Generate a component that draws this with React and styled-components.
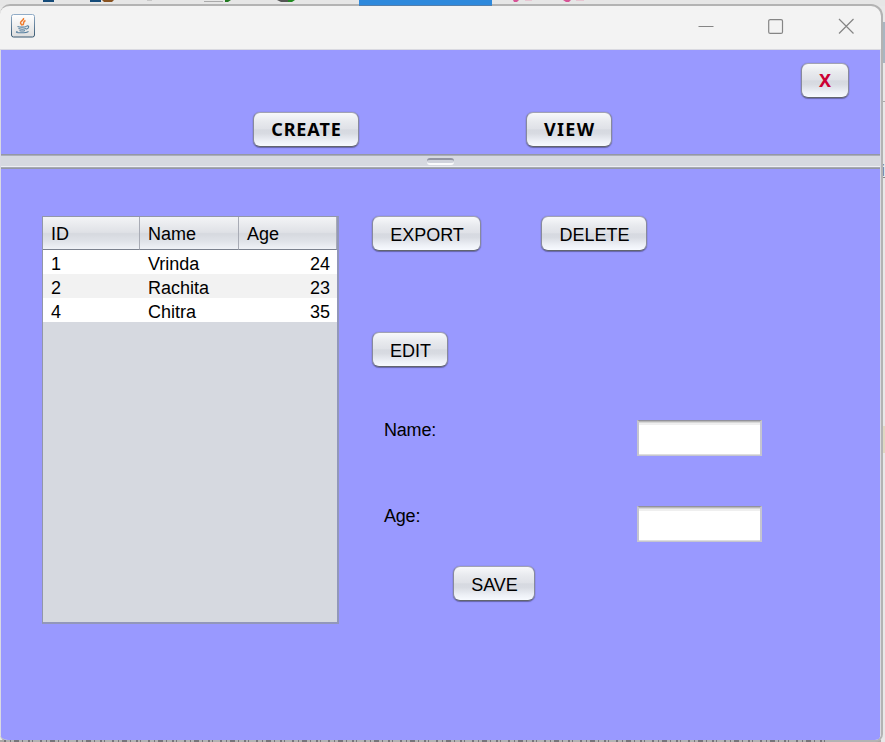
import React from "react";
import styled, { createGlobalStyle } from "styled-components";

const Global = createGlobalStyle`
  * { box-sizing: border-box; }
  body { margin: 0; overflow: hidden; }
`;

const Desktop = styled.div`
  position: relative;
  width: 885px;
  height: 742px;
  padding-top: 4px;
  overflow: hidden;
  background: #e8e8e8;
  font-family: "Liberation Sans", Arial, sans-serif;
  font-size: 18px;
  color: #000;
`;

const Backdrop = styled.svg`
  position: absolute;
  left: 0;
  top: 0;
`;

const EdgeShadow = styled.svg`
  position: absolute;
  left: 0;
  top: 0;
  pointer-events: none;
`;

const Window = styled.main`
  position: relative;
  width: 883px;
  height: 738px;
  overflow: hidden;
  display: flex;
  flex-direction: column;
  border: solid #b3b3b3;
  border-width: 2px 2px 2px 0;
  border-radius: 10px 12px 8px 8px;
  background: #f3f3f3;
`;

const TitleBar = styled.header`
  display: flex;
  align-items: center;
  justify-content: space-between;
  height: 44px;
  flex: none;
  padding: 0 26px 4px 11px;
  border-bottom: 1px solid #d9d9e0;
`;

const WindowControls = styled.div`
  display: flex;
  align-items: center;
  gap: 54px;
`;

const Client = styled.div`
  flex: 1;
  display: flex;
  flex-direction: column;
  border: solid #d9d9e3;
  border-width: 0 1px;
`;

const TopPane = styled.section`
  height: 104px;
  flex: none;
  padding: 13px 31px 0 252px;
  background: #99f;
`;

const CloseRow = styled.div`
  display: flex;
  justify-content: flex-end;
`;

const NavRow = styled.nav`
  display: flex;
  gap: 167px;
  margin-top: 14px;
`;

const Button = styled.button`
  flex: none;
  width: ${(p) => p.$width}px;
  height: 35px;
  padding: ${(p) => (p.$bold ? "0 0 1px" : "2px 0 0 1px")};
  border: 1.5px solid;
  border-color: #a2a3b3 #888a9c #62656f;
  border-radius: 7px;
  background: linear-gradient(#f8f9fb 0%, #e8eaee 25%, #dfe1e7 48%, #d6d9e0 51%, #d8dbe2 62%, #edf0f6 85%, #f7faff 100%);
  box-shadow: 0 1px 1px rgba(65, 65, 110, 0.55), 0 0 1px rgba(80, 80, 110, 0.7);
  color: ${(p) => (p.$danger ? "#cc0033" : "#000")};
  font: ${(p) => (p.$bold ? 'bold 18px "Noto Sans", sans-serif' : '18px "Liberation Sans", Arial, sans-serif')};
  letter-spacing: ${(p) => p.$tracking || 0}px;
  text-indent: ${(p) => p.$tracking || 0}px;
  line-height: 30px;
  white-space: nowrap;
`;

const Divider = styled.div`
  flex: none;
  height: 15px;
  display: flex;
  justify-content: center;
  padding-top: 2px;
  border: solid #9498a4;
  border-width: 1px 0;
  background: linear-gradient(#abaeb9 0 1px, #d6d9e0 1px 11px, #edeff3 11px 12px, #a6a9b4 12px);
`;

const Grip = styled.span`
  width: 27px;
  height: 7px;
  margin-top: 1px;
  border-radius: 3px;
  border-top: 2px solid #9295a3;
  border-bottom: 2px solid #fafbfc;
  background: #d0d3dc;
`;

const BottomPane = styled.section`
  flex: 1;
  display: flex;
  align-items: flex-start;
  gap: 33px;
  padding: 47px 0 0 41px;
  background: #99f;
`;

const TableFrame = styled.div`
  width: 297px;
  height: 408px;
  border: 1px solid #9297a1;
  border-width: 1px 2px 2px 1px;
  border-color: #9297a8 #9297ba #9297ba #9297a8;
  background: #d6d9e0;
`;

const Table = styled.table`
  width: 294px;
  table-layout: fixed;
  border-collapse: separate;
  border-spacing: 0;
`;

const HeadCell = styled.th`
  width: ${(p) => p.$width}px;
  height: 33px;
  padding: 2px 8px 0;
  border-right: 1px solid #a8abb5;
  border-bottom: 1px solid #7b818e;
  background: linear-gradient(#f3f4f6 0%, #dfe1e6 48%, #d6d9df 52%, #dfe2e8 75%, #f0f2f7 100%);
  font-weight: normal;
  text-align: left;
`;

const Row = styled.tr`
  height: 24px;
  background: ${(p) => (p.$shaded ? "#f2f2f2" : "#fff")};
`;

const Cell = styled.td`
  height: 24px;
  padding: 4px ${(p) => (p.$end ? 7 : 8)}px 0 8px;
  line-height: 20px;
  text-align: ${(p) => (p.$end ? "right" : "left")};
`;

const Editor = styled.form`
  display: flex;
  flex-direction: column;
`;

const Actions = styled.div`
  display: flex;
  gap: 60px;
  margin-bottom: 81px;
`;

const Field = styled.label`
  display: flex;
  justify-content: space-between;
  width: 378px;
  height: 36px;
  margin: ${(p) => p.$above}px 0 0 12px;
  line-height: 20px;
  letter-spacing: -0.2px;
`;

const TextInput = styled.input`
  width: 125px;
  height: 36px;
  border: 1px solid #c5c5d0;
  border-top: 1px solid #92929b;
  border-width: 1px 2px;
  background: #fff;
  box-shadow: inset 0 1px #b8b8b8, inset 0 2px #d8d8d8, inset 0 4px #efefef, inset 0 -1px #dedede;
`;

const SaveRow = styled.div`
  margin: 24px 0 0 81px;
`;

const records = [
  { id: 1, name: "Vrinda", age: 24 },
  { id: 2, name: "Rachita", age: 23 },
  { id: 4, name: "Chitra", age: 35 },
];

function DesktopBackdrop() {
  return (
    <Backdrop width="885" height="742">
      <rect width="885" height="6" fill="#e6e6e6" />
      <g>
        <path d="M43 0h11v2H43zM90 0h11v2H90z" fill="#154b79" />
        <path d="M102 0h12l-2 2h-8z" fill="#885321" />
        <path d="M147 0h5M204 1.5h19" stroke="#aaa" />
        <path d="M225 0h6l-3 2h-3z" fill="#207820" />
        <path d="M277 0h12v2h-8z" fill="#555" />
        <path d="M288 0h7l-3 2h-4z" fill="#208b20" />
        <path d="M513 0h6l-2 2h-3zM563 0h8l-2 2h-3z" fill="#d75396" />
        <path d="M525 0h7M576 0h8" stroke="#e7a6bd" />
      </g>
      <rect x="881" y="22" width="4" height="41" fill="#a9b6c1" />
      <path d="M881 101.5h4" stroke="#aaa" />
      <text x="881.2" y="176" fill="#777" fontSize="16">i</text>
      <path d="M881 177.5h4" stroke="#888" />
      <rect x="881" y="426" width="4" height="27" fill="#ded8c3" />
      <rect y="740" width="881" height="2" fill="#aaa7a5" />
    </Backdrop>
  );
}

function WindowEdge() {
  return (
    <EdgeShadow width="885" height="742">
      <path d="M359 0h133v5H359z" fill="#2e89dc" />
      <path d="M359 5h133v1H359z" fill="#557fab" />
      <path d="M4 741h824" stroke="#77757a" strokeWidth="2" strokeDasharray="2 4 1 3 5 3 1 5 2 2 1 7" />
    </EdgeShadow>
  );
}

function JavaIcon() {
  return (
    <svg width="24" height="24" viewBox="0 0 24 24" fill="none">
      <defs>
        <linearGradient id="tileEdge" x2="0" y2="1">
          <stop stopColor="#91acc7" />
          <stop offset="1" stopColor="#36566f" />
        </linearGradient>
        <linearGradient id="tileFace" x2="0" y2="1">
          <stop stopColor="#fff" />
          <stop offset="1" stopColor="#dedede" />
        </linearGradient>
      </defs>
      <rect x=".5" y=".5" width="23" height="22.5" rx="2" fill="url(#tileFace)" stroke="url(#tileEdge)" />
      <path d="M12.5 4c1 2-3.500 3-3 5 .2 1.200 1.500 1.500 1.800 2.500M14.500 6.500c-3 1.200-1.200 2.500-2.500 4.500" stroke="#ef7b2d" strokeWidth="1.500" />
      <path d="M6.500 12.500c2 .8 7 .8 9 0M7.500 14.500c2 .8 5.500.8 7.500 0M8.500 16.500c1.500.6 4 .6 5.500 0M15.500 12c3-.8 3 2.300-.5 3.300M6.500 17.500c-5 1.500 9 2 11-.2" stroke="#557f9f" strokeWidth="1.100" />
    </svg>
  );
}

function Controls() {
  return (
    <WindowControls>
      <svg width="16" height="16" fill="none" stroke="#858585">
        <path d="M.5 8.500h15" />
      </svg>
      <svg width="16" height="16" fill="none" stroke="#858585" strokeWidth="1.200">
        <rect x=".7" y="1.600" width="13.800" height="13.800" rx="1.500" />
      </svg>
      <svg width="17" height="16" fill="none" stroke="#858585" strokeWidth="1.200">
        <path d="m1 1 14.500 14.500M15.500 1 1 15.500" />
      </svg>
    </WindowControls>
  );
}

function RecordsTable() {
  return (
    <TableFrame>
      <Table>
        <thead>
          <tr>
            <HeadCell $width={97}>ID</HeadCell>
            <HeadCell $width={99}>Name</HeadCell>
            <HeadCell $width={98}>Age</HeadCell>
          </tr>
        </thead>
        <tbody>
          {records.map((r, i) => (
            <Row key={r.id} $shaded={i % 2 === 1}>
              <Cell>{r.id}</Cell>
              <Cell>{r.name}</Cell>
              <Cell $end>{r.age}</Cell>
            </Row>
          ))}
        </tbody>
      </Table>
    </TableFrame>
  );
}

export default function App() {
  return (
    <>
      <Global />
      <Desktop>
        <DesktopBackdrop />
        <Window>
          <TitleBar>
            <JavaIcon />
            <Controls />
          </TitleBar>
          <Client>
            <TopPane>
              <CloseRow>
                <Button $width={48} $bold $danger>X</Button>
              </CloseRow>
              <NavRow>
                <Button $width={106} $bold $tracking={0.9}>CREATE</Button>
                <Button $width={86} $bold $tracking={1.3}>VIEW</Button>
              </NavRow>
            </TopPane>
            <Divider>
              <Grip />
            </Divider>
            <BottomPane>
              <RecordsTable />
              <Editor>
                <Actions>
                  <Button type="button" $width={109}>EXPORT</Button>
                  <Button type="button" $width={106}>DELETE</Button>
                </Actions>
                <Button type="button" $width={76}>EDIT</Button>
                <Field $above={53}>
                  Name:
                  <TextInput />
                </Field>
                <Field $above={50}>
                  Age:
                  <TextInput />
                </Field>
                <SaveRow>
                  <Button type="button" $width={82}>SAVE</Button>
                </SaveRow>
              </Editor>
            </BottomPane>
          </Client>
        </Window>
        <WindowEdge />
      </Desktop>
    </>
  );
}
